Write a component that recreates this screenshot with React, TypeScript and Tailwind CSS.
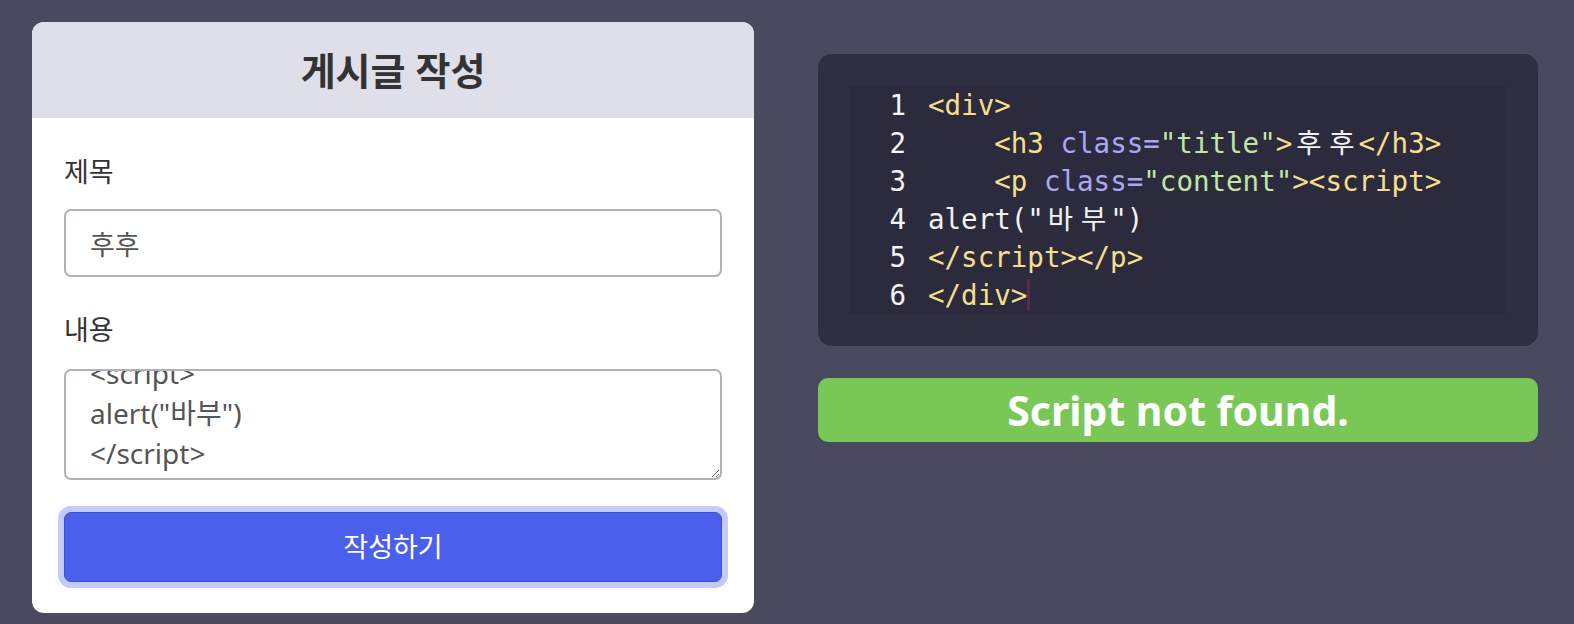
import React from "react";

const Y = "text-[#f6df8a]";
const P = "text-[#a8a8f4]";
const G = "text-[#c2e6a4]";
const W = "text-[#f2f2f2]";

function K({ c }: { c: string }) {
  return <span className={`inline-block w-[2ch] text-center ${W}`}>{c}</span>;
}

export default function App() {
  const lines: React.ReactNode[] = [
    <span className={Y}>{"<div>"}</span>,
    <>
      <span>{"    "}</span>
      <span className={Y}>{"<h3"}</span>
      <span> </span>
      <span className={P}>{"class="}</span>
      <span className={G}>{'"title"'}</span>
      <span className={Y}>{">"}</span>
      <K c="후" />
      <K c="후" />
      <span className={Y}>{"</h3>"}</span>
    </>,
    <>
      <span>{"    "}</span>
      <span className={Y}>{"<p"}</span>
      <span> </span>
      <span className={P}>{"class="}</span>
      <span className={G}>{'"content"'}</span>
      <span className={Y}>{"><script>"}</span>
    </>,
    <>
      <span className={W}>{'alert("'}</span>
      <K c="바" />
      <K c="부" />
      <span className={W}>{'")'}</span>
    </>,
    <span className={Y}>{"</script></p>"}</span>,
    <>
      <span className={Y}>{"</div>"}</span>
      <span className="inline-block w-[3px] h-[32px] align-middle bg-[#5a2a4c] -mt-[4px]" />
    </>,
  ];

  return (
    <div className="min-h-screen bg-[#4a4a5e] flex items-start gap-[64px] pl-[32px] pt-[22px] pb-[11px]">
      <div
        className="w-[722px] shrink-0 bg-white rounded-[12px] overflow-hidden"
        style={{ fontFamily: '"Noto Sans", "Noto Sans CJK KR", sans-serif' }}
      >
        <div className="h-[96px] bg-[#dfdfea] flex items-center justify-center">
          <h1 className="text-[38px] font-bold text-[#333333] leading-none">게시글 작성</h1>
        </div>
        <div className="px-[32px] pt-[36px] pb-[31px] flex flex-col">
          <label className="text-[27px] leading-[36px] text-[#333333] mb-[19px]">제목</label>
          <input
            className="h-[68px] w-full rounded-[7px] border-2 border-[#b0b0b8] px-[24px] text-[27px] text-[#555555] outline-none"
            defaultValue="후후"
          />
          <label className="text-[27px] leading-[36px] text-[#333333] mt-[35px] mb-[21px]">내용</label>
          <textarea
            ref={(el) => {
              if (el) el.scrollTop = 32;
            }}
            className="h-[111px] w-full rounded-[7px] border-2 border-[#b0b0b8] px-[24px] py-[14px] text-[28px] leading-[40px] text-[#555555] outline-none"
            defaultValue={'<script>\nalert("바부")\n</script>'}
          />
          <button className="mt-[32px] h-[70px] w-full rounded-[7px] bg-[#4a60ec] border border-[#3d50d8] ring-[6px] ring-[#c4cafa] text-white text-[27px]">
            작성하기
          </button>
        </div>
      </div>

      <div className="w-[720px] shrink-0 mt-[32px] flex flex-col gap-[32px]">
        <div className="bg-[#302f42] rounded-[14px] p-[32px]">
          <div
            className="bg-[#2c2b3d] text-[27.5px] leading-[38px] whitespace-pre text-[#f2f2f2]"
            style={{ fontFamily: '"DejaVu Sans Mono", "Noto Sans CJK KR", monospace' }}
          >
            {lines.map((l, i) => (
              <div key={i} className="flex h-[38px]">
                <span className="w-[56px] text-right text-[#f4f4f4] shrink-0">{i + 1}</span>
                <span className="ml-[22px]">{l}</span>
              </div>
            ))}
          </div>
        </div>
        <div className="h-[64px] bg-[#78c757] rounded-[10px] flex items-center justify-center">
          <span
            className="text-white font-bold text-[41px] leading-none"
            style={{ fontFamily: '"Noto Sans", sans-serif' }}
          >
            Script not found.
          </span>
        </div>
      </div>
    </div>
  );
}
